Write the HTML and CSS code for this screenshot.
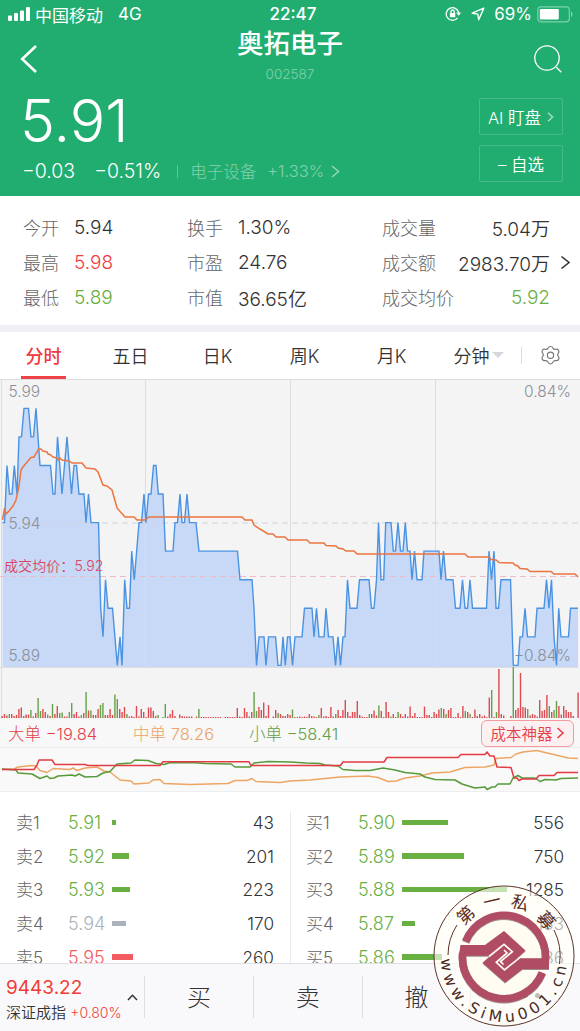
FILE: index.html
```html
<!DOCTYPE html>
<html lang="zh-CN">
<head>
  <meta charset="UTF-8" />
  <meta name="viewport" content="width=device-width, initial-scale=1.0"/>
  <title>奥拓电子 002587</title>
  <link rel="stylesheet" href="styles.css">
</head>
<body>
  <div class="header">
    <div class="status-bar">
      <div class="status-left">
        <svg class="signal" width="23" height="14" viewBox="0 0 23 14" fill="#fff">
          <rect x="0" y="8.5" width="4" height="5.5" rx="1"/>
          <rect x="6" y="6" width="4" height="8" rx="1"/>
          <rect x="12" y="3.5" width="4" height="10.5" rx="1"/>
          <rect x="18" y="0" width="4" height="14" rx="1"/>
        </svg>
        <span class="carrier">中国移动</span>
        <span>4G</span>
      </div>
      <div class="status-time">22:47</div>
      <div class="status-right">
        <svg width="17" height="16" viewBox="0 0 17 16" fill="none" stroke="#fff" stroke-width="1.3">
          <path d="M12.6 11.8A6.3 6.3 0 1 1 13.8 7.2"/>
          <path d="M11.2 6.6h5l-2.5 3.2z" fill="#fff" stroke="none"/>
          <rect x="4.9" y="7" width="5.4" height="4.2" fill="#fff" stroke="none"/>
          <path d="M6 7.2V5.6a1.6 1.6 0 0 1 3.2 0v1.6"/>
        </svg>
        <svg class="location" width="14" height="14" viewBox="0 0 14 14" fill="none" stroke="#fff" stroke-width="1.4" stroke-linejoin="round">
          <path d="M12.8 1.2L1.2 6.2l5.6.9.9 5.6z"/>
        </svg>
        <span class="battery-text">69%</span>
        <svg width="37" height="17" viewBox="0 0 37 17" fill="none">
          <rect x=".8" y=".8" width="31.5" height="15" rx="3" stroke="#7fd0ac" stroke-width="1.2"/>
          <rect x="2.8" y="3" width="19" height="10.6" rx="1" fill="#fff"/>
          <path d="M34 5.5c2 .8 2 4.8 0 5.6z" fill="#7fd0ac"/>
        </svg>
      </div>
    </div>

    <div class="nav">
      <svg class="back-btn" width="18" height="28" viewBox="0 0 18 28" fill="none" stroke="#fff" stroke-width="2.6">
        <path d="M16 1L2.2 14 16 27"/>
      </svg>
      <div class="nav-title">
        <h1>奥拓电子</h1>
        <p>002587</p>
      </div>
      <svg class="search-btn" width="29" height="29" viewBox="0 0 29 29" fill="none" stroke="#fff" stroke-width="1.3">
        <circle cx="13" cy="13" r="12.2"/>
        <path d="M22.3 22.3l5 5"/>
      </svg>
    </div>

    <div class="quote">
      <div class="quote-main">
        <div class="price">5.91</div>
        <div class="change">
          <span class="change-value">−0.03</span>
          <span class="change-percent">−0.51%</span>
          <span class="sector-name">电子设备</span>
          <span class="sector-change">+1.33%</span>
          <svg width="9" height="13" viewBox="0 0 9 13" fill="none" stroke="#8fd6b6" stroke-width="1.6"><path d="M1 1l6.5 5.5L1 12"/></svg>
        </div>
      </div>
      <div class="quote-actions">
        <div class="action">AI 盯盘<svg width="7" height="10" viewBox="0 0 7 10" fill="none" stroke="#a6dfc6" stroke-width="1.4"><path d="M1 .8L5.6 5 1 9.2"/></svg></div>
        <div class="action">– 自选</div>
      </div>
    </div>
  </div>

  <div class="stats">
    <div class="stat"><span>今开</span><b>5.94</b></div>
    <div class="stat"><span>换手</span><b>1.30%</b></div>
    <div class="stat wide"><span>成交量</span><b>5.04万</b></div>
    <div class="stat"><span>最高</span><b class="up">5.98</b></div>
    <div class="stat"><span>市盈</span><b>24.76</b></div>
    <div class="stat wide"><span>成交额</span><b>2983.70万</b>
      <svg class="stat-more" width="11" height="15" viewBox="0 0 11 15" fill="none" stroke="#333" stroke-width="1.6"><path d="M1.5 1.5l7.5 6-7.5 6"/></svg>
    </div>
    <div class="stat"><span>最低</span><b class="down">5.89</b></div>
    <div class="stat"><span>市值</span><b>36.65亿</b></div>
    <div class="stat wide"><span>成交均价</span><b class="down">5.92</b></div>
  </div>

  <div class="tabs">
    <div class="tab active"><span>分时</span></div>
    <div class="tab">五日</div>
    <div class="tab">日K</div>
    <div class="tab">周K</div>
    <div class="tab">月K</div>
    <div class="tab">分钟<i class="caret"></i></div>
    <div class="settings">
      <svg width="21" height="21" viewBox="0 -.6 20 20" fill="none" stroke="#777" stroke-width="1.1" stroke-linejoin="round">
        <path d="M7.6 2.6Q8.2.8 10 .8t2.4 1.8q.9 1.3 2.5.8 2-.5 2.8 1t-.4 2.9q-1.2 1.4 0 2.7 1.4 1.6.5 3.1t-2.9 1.2q-1.7-.3-2.4 1.2-.7 2-2.5 2t-2.5-2q-.7-1.5-2.4-1.2-2 .3-2.9-1.2t.5-3.1q1.2-1.3 0-2.7-1.3-1.4-.4-2.9t2.8-1q1.6.5 2.5-.8z"/>
        <circle cx="10" cy="9.2" r="3"/>
      </svg>
    </div>
  </div>

  <div class="chart">
    <svg id="priceChart" width="580" height="340" viewBox="0 379 580 340" fill="none">
      <polygon id="priceArea" fill="#c7d9f7"/>
      <g stroke="#dddddf" stroke-width="1">
        <path d="M145.5 379V667M290.5 379V667M435.5 379V667"/>
        <path d="M0 379.5H580M1.5 379V719M0 667.5H578"/>
      </g>
      <path d="M2 523H580" stroke="#d2d2da" stroke-dasharray="6 4"/>
      <path d="M0 576.5H580" stroke="#eebcc8" stroke-dasharray="6 4"/>
      <polyline id="priceLine" stroke="#4a93e3" stroke-width="1.4"/>
      <polyline id="avgLine" stroke="#ec7440" stroke-width="1.5"/>
      <g id="volume"></g>
      <g class="axis">
        <text x="8.5" y="397">5.99</text>
        <text x="8.5" y="528.5">5.94</text>
        <text x="8.5" y="660.5">5.89</text>
        <text x="571" y="397" text-anchor="end">0.84%</text>
        <text x="571" y="660.5" text-anchor="end">−0.84%</text>
      </g>
      <text class="avg-label" x="4" y="570.5">成交均价：5.92</text>
    </svg>
  </div>

  <div class="orders">
    <span class="big">大单 −19.84</span>
    <span class="mid">中单 78.26</span>
    <span class="small">小单 −58.41</span>
    <div class="cost-btn">成本神器<svg width="9" height="12" viewBox="0 0 9 12" fill="none" stroke="#e5404a" stroke-width="1.6"><path d="M1.5 1L7 6l-5.5 5"/></svg></div>
  </div>
  <div class="flow">
    <svg width="580" height="43" viewBox="0 748 580 43" fill="none" stroke-width="1.5" stroke-linejoin="round">
      <polyline id="flowMid" stroke="#eda564"/>
      <polyline id="flowSmall" stroke="#579a3a"/>
      <polyline id="flowBig" stroke="#e23a42"/>
    </svg>
  </div>

  <div class="book">
    <div class="book-side" id="sellSide"></div>
    <div class="book-side" id="buySide"></div>
  </div>

  <div class="footer">
    <div class="index">
      <div>
        <div class="index-value">9443.22</div>
        <div class="index-name">深证成指 <span>+0.80%</span></div>
      </div>
      <svg width="11" height="7" viewBox="0 0 11 7" fill="none" stroke="#333" stroke-width="1.5"><path d="M1 6l4.5-4.7L10 6"/></svg>
    </div>
    <div class="trade">买</div>
    <div class="trade">卖</div>
    <div class="trade">撤</div>
    <div class="trade more"><i></i><i></i><i></i></div>
  </div>

  <svg class="stamp" width="144" height="144" viewBox="-72 -72 144 144">
    <defs>
      <path id="stampArc" d="M-63 3A63 63 0 0 0 63 3"/>
      <filter id="stampShadow" x="-10%" y="-10%" width="120%" height="120%">
        <feDropShadow dx="0" dy=".8" stdDeviation=".7" flood-color="#2e1014" flood-opacity=".6"/>
      </filter>
    </defs>
    <circle r="70" fill="#fffef6" fill-opacity=".62"/>
    <circle r="44" cy="1" fill="#fffdf0" fill-opacity=".9"/>
    <circle r="70" fill="none" stroke="#5a3328" stroke-width="1"/>
    <path d="M-56 -1A56 56 0 0 1 -47 -31M55.500 8A56 56 0 0 0 50 -26" fill="none" stroke="#5a3328"/>
    <g transform="translate(0 1)">
      <g filter="url(#stampShadow)">
        <path d="M-38.300 -15.700A41.400 41.400 0 0 1 41.300 4" fill="none" stroke="#b04d65" stroke-width="7.600"/>
        <path d="M38.300 15.700A41.400 41.400 0 0 1 -41.300 -4" fill="none" stroke="#b04d65" stroke-width="7.600"/>
        <path d="M-43.500 -12H-19L0 -26 21.500 -6.500 12.700 1.300H45V12H18.500L1 25.500-21.500 5.700-13.500 -1.300H-45z" fill="#b04d65"/>
      </g>
      <path d="M-15 -.5L0 -12.700 8.300 -5.300-3.500 4.500-.5 7.500M15.500 .8L.5 12.800-7.700 5.300 3 -4 0 -7" fill="none" stroke="#fffdf0" stroke-width="1.700"/>
    </g>
    <g class="stamp-name">
      <text transform="translate(-38 -40.500) rotate(-43)" y="6">第</text>
      <text transform="translate(-12 -54.500) rotate(-13)" y="6">一</text>
      <text transform="translate(16 -53) rotate(17)" y="6">私</text>
      <text transform="translate(42 -35.500) rotate(48)" y="6">募</text>
    </g>
    <text class="stamp-url"><textPath href="#stampArc" textLength="190">www.SiMu001.cn</textPath></text>
  </svg>

  <script src="chart.js"></script>
</body>
</html>
```

FILE: styles.css
```css
* {
  box-sizing: border-box;
}

body {
  margin: 0;
  width: 580px;
  height: 1031px;
  overflow: hidden;
  position: relative;
  display: flex;
  flex-direction: column;
  background: #fff;
  color: #333;
  font-family: Inter, "Noto Sans CJK SC", sans-serif;
  font-weight: 300;
}

svg {
  display: block;
  flex: none;
}

.header {
  height: 196px;
  background: #22ad70;
  color: #fff;
}

.status-bar {
  height: 30px;
  padding: 0 6px 2px 8px;
  display: grid;
  grid-template-columns: 1fr auto 1fr;
  align-items: center;
  font-size: 17px;
  font-weight: 400;
}

.status-left,
.status-right {
  display: flex;
  align-items: center;
}

.carrier {
  margin: 0 15px 0 4px;
}

.status-time {
  padding-left: 4px;
  font-weight: 500;
}

.status-right {
  justify-content: flex-end;
}

.location {
  margin: 0 9px;
}

.battery-text {
  margin-right: 5px;
}

.nav {
  height: 58px;
  padding: 0 17px 0 20px;
  display: grid;
  grid-template-columns: 1fr auto 1fr;
}

.back-btn {
  margin-top: 15px;
}

.nav-title {
  margin-left: -3px;
  text-align: center;
}

.nav-title h1 {
  margin: 0;
  font-size: 26.5px;
  font-weight: 500;
  line-height: 26px;
}

.nav-title p {
  margin: 10px 0 0;
  font-size: 13.5px;
  line-height: 16px;
  color: #83d0ad;
}

.search-btn {
  justify-self: end;
  margin-top: 15px;
}

.quote {
  display: flex;
  justify-content: space-between;
  padding: 0 17px 0 22px;
}

.price {
  height: 66px;
  margin-left: -2px;
  font-size: 59px;
  font-weight: 350;
  line-height: 65px;
}

.change {
  display: flex;
  align-items: center;
  height: 34px;
  font-size: 19.5px;
  font-weight: 350;
}

.change-percent {
  margin: 0 16px 0 19px;
}

.sector-name {
  padding-left: 13px;
  font-size: 16.5px;
  font-weight: 300;
  color: #83d0ad;
  background: linear-gradient(#5fc598, #5fc598) no-repeat 0 50% / 1px 13px;
}

.sector-change {
  margin: 0 7px 0 11px;
  font-size: 16.5px;
  font-weight: 300;
  color: #83d0ad;
}

.quote-actions {
  display: flex;
  flex-direction: column;
  gap: 10px;
  padding-top: 10px;
}

.action {
  display: flex;
  align-items: center;
  justify-content: center;
  gap: 6px;
  width: 84px;
  height: 37px;
  border: 1px solid #46bb89;
  border-radius: 2px;
  font-size: 16.5px;
  font-weight: 350;
}

.stats {
  height: 129px;
  padding: 14px 30px 0 23px;
  display: grid;
  grid-template-columns: 164px 195px 1fr;
  grid-auto-rows: 35px;
}

.stat {
  position: relative;
  display: flex;
  align-items: center;
}

.stat span {
  width: 51px;
  padding-bottom: 2px;
  font-size: 18px;
  color: #666;
  white-space: nowrap;
}

.stat b {
  font-size: 19px;
  font-weight: 350;
}

.stat.wide {
  justify-content: space-between;
}

.stat-more {
  position: absolute;
  left: 178px;
}

.stat .up {
  color: #f03c40;
}

.stat .down {
  color: #68ae44;
}

.tabs {
  height: 54px;
  border-top: 7px solid #efeff4;
  display: flex;
  align-items: stretch;
}

.tab {
  width: 87px;
  padding-bottom: 2px;
  display: flex;
  align-items: center;
  justify-content: center;
  font-size: 18px;
  font-weight: 350;
}

.tab.active {
  padding-bottom: 0;
}

.tab.active span {
  align-self: stretch;
  display: flex;
  align-items: center;
  padding: 1px 4.5px 0;
  border-bottom: 3px solid #ee4249;
  font-weight: 500;
  color: #ee3a42;
}

.caret {
  margin-left: 2px;
  border: 6px solid transparent;
  border-top-color: #d6d6dc;
  border-bottom: 0;
}

.settings {
  flex: 1;
  display: flex;
  align-items: center;
  justify-content: center;
  margin-left: -1px;
  background: linear-gradient(#dcdce0, #dcdce0) no-repeat 0 50% / 1px 17px;
}

.chart {
  background: #f4f4f4;
}

.axis text {
  font-size: 15.5px;
  fill: #8b8f98;
}

.avg-label {
  font-size: 14.1px;
  font-weight: 350;
  fill: #dc4660;
}

.orders {
  height: 29px;
  display: grid;
  grid-template-columns: 125px 116px 1fr auto;
  align-items: center;
  padding: 0 6px 0 8px;
  background: #f8f8f8;
  border-bottom: 1px solid #eee;
  font-size: 16.5px;
}

.orders span {
  padding-bottom: 1px;
}

.big {
  color: #e5404a;
}

.mid {
  color: #eba368;
}

.small {
  color: #659f48;
}

.cost-btn {
  width: 93px;
  height: 27px;
  display: flex;
  align-items: center;
  justify-content: center;
  gap: 3px;
  border: 1px solid #f29a9e;
  border-radius: 6px;
  background: #fdf0f0;
  font-size: 15.5px;
  font-weight: 350;
  color: #e5404a;
}

.flow {
  height: 44px;
  background: #f9f9f9;
  border-bottom: 1px solid #eee;
}

.book {
  height: 171px;
  overflow: hidden;
  display: grid;
  grid-template-columns: 290px 290px;
  padding-top: 13.5px;
}

.book-side + .book-side {
  background: linear-gradient(#ececf0, #ececf0) no-repeat 0 5px / 1px 100%;
}

.book-row {
  height: 33.7px;
  display: grid;
  grid-template-columns: 52px 44px 1fr auto;
  align-items: center;
  padding: 0 16px;
  font-size: 18px;
}

.book-row .level {
  padding-bottom: 2px;
  font-size: 17px;
  color: #666;
}

.book-row .qty {
  font-size: 17.2px;
  font-weight: 350;
}

.book-row .bar {
  height: 5.5px;
  background: currentColor;
}

.down {
  color: #68b042;
}

.flat {
  color: #abb2bc;
}

.up {
  color: #f25c60;
}

.footer {
  height: 68px;
  display: flex;
  border-top: 1px solid #e0e0e4;
  background: #f9f9fb;
}

.index {
  width: 144px;
  padding: 11px 6px 0;
  display: flex;
  justify-content: space-between;
}

.index svg {
  margin-top: 19px;
}

.index-value {
  font-size: 19px;
  font-weight: 400;
  line-height: 26px;
  color: #f03c36;
}

.index-name {
  font-size: 15px;
  font-weight: 350;
  line-height: 24px;
  white-space: nowrap;
  width: 120px;
}

.index-name span {
  font-size: 14px;
  color: #f03c36;
}

.trade {
  width: 108.8px;
  height: 42px;
  margin-top: 12px;
  padding-bottom: 4px;
  display: flex;
  align-items: center;
  justify-content: center;
  border-left: 1px solid #dedee2;
  font-size: 24px;
}

.more {
  gap: 7px;
}

.more i {
  width: 5px;
  height: 5px;
  border-radius: 50%;
  background: #555;
}

.stamp {
  position: absolute;
  left: 431.5px;
  top: 883.5px;
}

.stamp-name text {
  font-size: 17.5px;
  font-weight: 400;
  text-anchor: middle;
  fill: #5a2c22;
}

.stamp-url {
  font-family: "DejaVu Sans", sans-serif;
  font-size: 15.5px;
  font-weight: 400;
  fill: #4a2a20;
}
```

FILE: chart.js
```js
// minute prices: x followed by the number of ticks above 5.89
const prices = [
  [2.5,5],[4.5,5],[7,7],[9.5,6],[12,6],[14.3,7],[17,6],[19,8],[21.5,8],[24,9],[28.5,9],[31,8],[33.5,8],[36,9],[40,7],
  [50.5,7],[53,6],[55,6],[57.5,8],[62,6],[67,8],[71.5,6],[74,7],[76.5,7],[79,6],[84,6],[86,5],[88.5,6],[91,5],[98.5,5],
  [100.7,2],[103,1],[105.5,3],[108,2],[112.5,2],[117.3,0],[120,1],[122,0],[124.7,3],[127,2],[129.5,2],[131.7,4],[134.3,3],
  [139,5],[141.5,5],[144,6],[146,5],[148.5,6],[151,6],[153.5,7],[156,7],[158.3,6],[163,6],[165.5,4],[173,4],[175,5],
  [177.5,5],[180,6],[182,5],[184.5,5],[187,6],[189.5,5],[196,5],[199,4],[237.5,4],[240,3],[252,3],[254,2],[256.5,0],
  [259,1],[264,1],[266,0],[268.5,1],[275.5,1],[278,0],[281,0],[283,1],[285.3,0],[287.5,1],[290,1],[292.5,0],[295,1],
  [302,1],[304.5,2],[312,2],[314,1],[316.5,2],[319,1],[324,1],[326,2],[328.5,1],[333,1],[335.5,0],[338,1],[340.5,0],
  [343,1],[345,1],[347.5,3],[350,2],[357,2],[359.5,3],[369,3],[371.5,2],[374,2],[376.5,3],[378.5,5],[381,3],[383.7,3],
  [385.7,5],[391,5],[393.3,4],[395.5,4],[398,5],[400.5,4],[403,4],[405.3,5],[407.5,4],[410,4],[412,3],[414.5,4],[417,3],
  [422,3],[424,4],[439,4],[441,3],[443.5,4],[446,3],[453,3],[455.5,2],[460,2],[462.5,3],[465,2],[467.5,2],[470,3],
  [472.5,2],[486.5,2],[489,4],[491.5,3],[494,4],[496,2],[498.5,2],[501,3],[510.5,3],[513.3,0],[518,0],[520,1],[522.5,1],
  [525,2],[527.5,1],[535,1],[537,2],[544,2],[546.5,3],[549,2],[551.5,3],[554,1],[556.5,0],[558.7,2],[561,1],[568.5,1],
  [570.5,2],[578,2]
];

// bar height per minute, negative when the price fell
const volume = [
  2,4,2.5,-4,4,2,3,9,10.5,2,3.5,3.5,-8,1.5,5,-20,-7,9,6,-3.5,2,-14,4,12,-5,-5.5,1.5,1.5,-6,-15,
  4,6,1.5,-3,5,-26,7.5,-7.5,3,3,9,-13,-15,3,3,9,3,-23.5,-19,9,6,11,-4,1.5,2,1,12,1.5,9,6,
  1,10.5,10.5,7,2,-3,0,-1,-14,1.5,4,8,2,0,3.5,2,1.5,1.5,1.5,1.5,0,1.5,-9,1,1,1,1,1,1,1,
  1,1,0,1,1,1,1,1,10,1.5,1,10,6,1.5,6,-26,-7,11,8,15.5,2,13,0,1.5,8,-5,4,2,2,4,
  3,-8.5,1,1,1.5,1,1.5,1,4,2,1.5,1,-3,10,1.5,2,1,11,1.5,-4,8,2,8,18,6,2,6,6,17,3,
  1.5,1,1,-4,4,7.5,2.5,-12.5,7,1,16,6,-1.5,4,1,-6,4,1.5,4,1.5,11.5,2,5,1,1,1,11.5,3,3,1,
  6,4,8.5,-10,9,-4,8,10,1,1,5,1,12,-7,6,-4,1,8.5,2,4,1.5,2.5,1,20.5,-28,1,-6,49,4,2.5,
  0,0,2,-51,8,10,45,11,10.5,-9,2.5,4,3,1.5,18,7,8,23,-12,6,-8,-17,12,3.5,12,8,6,6,2,0,25.5
];

const pricePoints = prices.map(([x, tick]) => `${x},${665.4 - tick * 28.56}`).join(" ");
document.getElementById("priceLine").setAttribute("points", pricePoints);
document.getElementById("priceArea").setAttribute("points", `${pricePoints} 578,667 2.5,667`);

document.getElementById("avgLine").setAttribute("points",
  "2.5,520 4.5,508.5 6,514 9,511 13,506 16,500 19,486 21,470 23,467 25,464.5 31,457.5 34,457 37,452 38.5,449 41,449 " +
  "43,451 47,452 48,454 50,454.5 53,457 57,458 58,460 60,458 62,460 69,461 72,463 82,463 86,468 95,469 98,472 103,485 " +
  "107,486 112,490 117,508 125,517 134,517 137,520 145,520 149,517 242,517 245,520 252,520 254,525 260,529 268,534 " +
  "273,534 276,537 285,537 288,540 307,540 310,543 324,543 326,545.5 336,546 338,548 343,549 346,551 354,551 357,554 " +
  "465,554 468,557 489,557 491,559.5 496,560 499,562.5 513,563 515,565 518,566 520,568.5 527,569 530,571.5 " +
  "551,571.5 554,574 575,574 578,577");

document.getElementById("volume").innerHTML = volume.map((v, i) => {
  const h = Math.abs(v);
  return `<rect x="${(1.4 + i * 2.4).toFixed(1)}" y="${718 - h}" width="1.4" height="${h}" fill="${v < 0 ? "#64a14a" : "#dd4a50"}"/>`;
}).join("");

document.getElementById("flowBig").setAttribute("points",
  "2,769.5 34,769.5 37,765 39,760 52,760 55,764.5 85,764.5 88,765.5 160,765.5 163,761.8 249,761.8 251,765.5 340.5,765.5 " +
  "343,762 384,762 387,757.5 458,757.5 461,754.5 485,754.5 487,752 490,756 494,756 497,767 511,767.5 514,778 517,778 " +
  "519,780.5 522,779 536,779 539,775.5 554,775.5 557,772.5 578,772.5");

document.getElementById("flowSmall").setAttribute("points",
  "2,769 16,770 18,773 32,774 40,778.5 47,776 50,778.5 54,778 58,776 72,775 75,776 79,774 85,777 97,776.5 103,773 " +
  "110,771.5 117,764 131,763 135,760 148,760.5 156,763.5 164,764.5 170,762.8 195,762.8 205,763.5 231,764 235,767 250,767 " +
  "254,763 268,761.5 290,762 306,763 320,763.5 325,765 338,766 343,769.5 355,770.5 370,770.5 383,768 395,770 405,772.5 " +
  "420,774 425,777 435,779.5 455,780 462,784 475,788 485,787 487,789.5 492,787 495,787 498,784 510,784 513,778 " +
  "518,775.5 522,778 535,778 540,781.5 545,779.5 556,780 561,778.5 578,778");

document.getElementById("flowMid").setAttribute("points",
  "2,769.5 14,769 18,767 32,765.5 36,766 40,770.5 47,772.5 53,768.5 70,769.5 73,768 77,770.5 85,768 97,767 104,771 " +
  "110,772 120,780 131,781 134,784 149,783 153,780 160,779.5 164,783.5 190,784.5 228,783.5 235,780.5 247,780.5 " +
  "252,778.5 256,781.5 280,782.5 290,781 310,780 330,778 340,777 368,776 378,777.5 388,781.5 396,781 405,778 420,776 " +
  "432,773 450,772 465,767.5 485,767 494,765 496,758.5 511,757.5 516,754 523,752 537,750.5 545,752.5 560,756 568,758 578,758.5");

const sell = [["5.91", 43, "down"], ["5.92", 201, "down"], ["5.93", 223, "down"], ["5.94", 170, "flat"], ["5.95", 260, "up"]];
const buy = [["5.90", 556, "down"], ["5.89", 750, "down"], ["5.88", 1285, "down"], ["5.87", 153, "down"], ["5.86", 486, "down"]];

function renderSide(id, name, rows) {
  document.getElementById(id).innerHTML = rows.map(([price, qty, state], i) => `
    <div class="book-row">
      <span class="level">${name}${i + 1}</span>
      <span class="${state}">${price}</span>
      <div class="${state}"><div class="bar" style="width: ${(qty * 0.082).toFixed(1)}px"></div></div>
      <span class="qty">${qty}</span>
    </div>`).join("");
}

renderSide("sellSide", "卖", sell);
renderSide("buySide", "买", buy);
```
